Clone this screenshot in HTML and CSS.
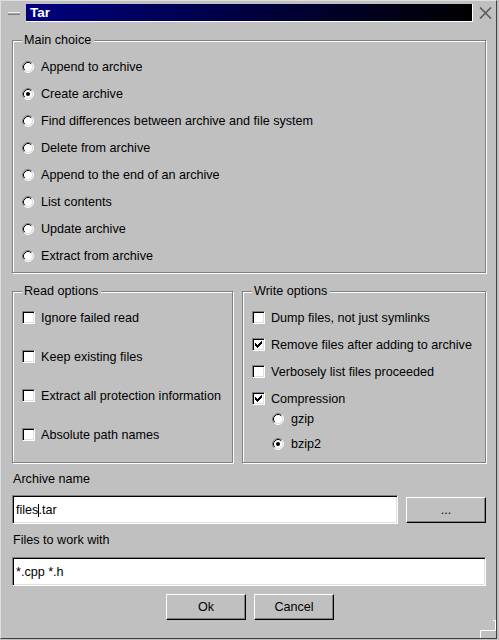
FILE: index.html
```html
<!DOCTYPE html>
<html>
<head>
<meta charset="utf-8">
<title>Tar</title>
<link rel="stylesheet" href="styles.css">
</head>
<body>
<svg class="defs" width="0" height="0">
  <symbol id="rb" viewBox="0 0 12 12">
    <circle cx="6" cy="6" r="5" fill="#fff"/>
    <path d="M2.11 9.89A5.5 5.5 0 0 1 9.89 2.11" fill="none" stroke="#808080"/>
    <path d="M9.89 2.11A5.5 5.5 0 0 1 2.11 9.89" fill="none" stroke="#fff"/>
    <path d="M2.82 9.18A4.5 4.5 0 0 1 9.18 2.82" fill="none" stroke="#000"/>
    <path d="M9.18 2.82A4.5 4.5 0 0 1 2.82 9.18" fill="none" stroke="#dfdfdf"/>
  </symbol>
  <symbol id="ck" viewBox="0 0 11 11">
    <path d="M2 4h1v3h-1z M3 5h1v3h-1z M4 6h1v3h-1z M5 5h1v3h-1z M6 4h1v3h-1z M7 3h1v3h-1z M8 2h1v3h-1z" fill="#000"/>
  </symbol>
</svg>
<div class="window">
  <div class="titlerow">
    <span class="sysmenu"></span>
    <div class="titlebar">Tar</div>
    <svg class="xbtn" width="13" height="12" viewBox="0 0 13 12">
      <path d="M1 0.5L12 11.5M12 0.5L1 11.5" stroke="#5e5e5e" stroke-width="1.7" fill="none"/>
    </svg>
  </div>
  <div class="content">
    <fieldset class="group main">
      <legend>Main choice</legend>
      <div class="row"><svg class="radio" width="12" height="12"><use href="#rb"/></svg><span>Append to archive</span></div>
      <div class="row"><svg class="radio" width="12" height="12"><use href="#rb"/><circle cx="6" cy="6" r="2" fill="#000"/></svg><span>Create archive</span></div>
      <div class="row"><svg class="radio" width="12" height="12"><use href="#rb"/></svg><span>Find differences between archive and file system</span></div>
      <div class="row"><svg class="radio" width="12" height="12"><use href="#rb"/></svg><span>Delete from archive</span></div>
      <div class="row"><svg class="radio" width="12" height="12"><use href="#rb"/></svg><span>Append to the end of an archive</span></div>
      <div class="row"><svg class="radio" width="12" height="12"><use href="#rb"/></svg><span>List contents</span></div>
      <div class="row"><svg class="radio" width="12" height="12"><use href="#rb"/></svg><span>Update archive</span></div>
      <div class="row"><svg class="radio" width="12" height="12"><use href="#rb"/></svg><span>Extract from archive</span></div>
    </fieldset>

    <div class="options">
      <fieldset class="group read">
        <legend>Read options</legend>
        <div class="row"><span class="check"></span><span>Ignore failed read</span></div>
        <div class="row"><span class="check"></span><span>Keep existing files</span></div>
        <div class="row"><span class="check"></span><span>Extract all protection information</span></div>
        <div class="row"><span class="check"></span><span>Absolute path names</span></div>
      </fieldset>
      <fieldset class="group write">
        <legend>Write options</legend>
        <div class="row"><span class="check"></span><span>Dump files, not just symlinks</span></div>
        <div class="row"><span class="check"><svg width="11" height="11"><use href="#ck"/></svg></span><span>Remove files after adding to archive</span></div>
        <div class="row"><span class="check"></span><span>Verbosely list files proceeded</span></div>
        <div class="row"><span class="check"><svg width="11" height="11"><use href="#ck"/></svg></span><span>Compression</span></div>
        <div class="row sub"><svg class="radio" width="12" height="12"><use href="#rb"/></svg><span>gzip</span></div>
        <div class="row sub second"><svg class="radio" width="12" height="12"><use href="#rb"/><circle cx="6" cy="6" r="2" fill="#000"/></svg><span>bzip2</span></div>
      </fieldset>
    </div>

    <div class="label">Archive name</div>
    <div class="name-row">
      <div class="input">files<span class="caret"></span>.tar</div>
      <button class="btn browse" type="button">...</button>
    </div>

    <div class="label">Files to work with</div>
    <div class="input files">*.cpp *.h</div>

    <div class="buttons">
      <button class="btn" type="button">Ok</button>
      <button class="btn" type="button">Cancel</button>
    </div>
  </div>
  <svg class="grip" width="20" height="20" viewBox="0 0 20 20">
    <path d="M16 1.5H18.5V11.5H3.5V19" fill="none" stroke="#fff"/>
  </svg>
</div>
</body>
</html>
```

FILE: styles.css
```css
* {
  box-sizing: border-box;
}

html,
body {
  margin: 0;
  padding: 0;
  background: #c0c0c0;
}

body {
  font-family: "Liberation Sans", Arial, Helvetica, sans-serif;
  font-size: 12.6px;
  color: #000;
}

.defs {
  position: absolute;
  width: 0;
  height: 0;
  overflow: hidden;
}

.window {
  position: relative;
  width: 497px;
  height: 639px;
  border: 1px solid;
  border-color: #dfdfdf #404040 #404040 #dfdfdf;
}

/* title bar */
.titlerow {
  display: grid;
  grid-template-columns: 12px 447px 13px;
  column-gap: 6px;
  align-items: center;
  height: 18px;
  margin-top: 3px;
  padding-left: 7px;
}

.sysmenu {
  display: block;
  width: 12px;
  height: 3px;
  border-top: 1px solid #f0f0f0;
  border-bottom: 1px solid #808080;
  background: #a8a8a8;
}

.titlebar {
  height: 18px;
  padding-left: 4px;
  background: linear-gradient(to right, #000080, #000000);
  border-right: 1px solid #fff;
  border-bottom: 1px solid #fff;
  color: #fff;
  font-weight: bold;
  font-size: 13.5px;
  line-height: 17px;
}

.xbtn {
  display: block;
  width: 13px;
  height: 12px;
}

/* content */
.content {
  padding: 12px 10px 0 11px;
}

.group {
  margin: 0;
  padding: 0 0 0 9px;
  min-width: 0;
  border: 1px solid #808080;
  box-shadow: 1px 1px 0 #fff, inset 1px 1px 0 #fff;
}

.group legend {
  padding: 0 3px 0 2px;
  line-height: 13px;
  background: #c0c0c0;
  white-space: nowrap;
}

.main {
  padding-top: 6px;
  padding-bottom: 3px;
}

.row {
  display: flex;
  align-items: center;
  height: 27px;
  line-height: 14px;
  white-space: nowrap;
}

.options {
  display: flex;
  gap: 9px;
  margin-top: 12px;
}

.read {
  flex: 0 0 221px;
  padding-bottom: 8px;
}

.read .row {
  height: 39px;
}

.write {
  flex: 1;
  padding-top: 6px;
  padding-bottom: 11px;
}

.write .sub {
  height: 14px;
  padding-left: 20px;
}

.write .sub.second {
  margin-top: 11px;
}

.radio {
  flex: none;
  display: block;
  width: 12px;
  height: 12px;
  margin-right: 7px;
}

.check {
  flex: none;
  display: block;
  width: 13px;
  height: 13px;
  margin-right: 6px;
  background: #fff;
  border: 1px solid;
  border-color: #808080 #fff #fff #808080;
  box-shadow: inset 1px 1px 0 #000, inset -1px -1px 0 #dfdfdf;
}

.check svg {
  display: block;
}

/* fields */
.label {
  margin-top: 9px;
  padding-left: 1px;
  line-height: 14px;
}

.name-row {
  display: flex;
  align-items: center;
  gap: 8px;
  margin-top: 9px;
}

.input {
  height: 29px;
  padding: 4px 0 0 3px;
  background: #fff;
  border: 1px solid;
  border-color: #808080 #fff #fff #808080;
  box-shadow: inset 1px 1px 0 #000, inset -1px -1px 0 #dfdfdf;
  line-height: 21px;
  white-space: nowrap;
}

.name-row .input {
  flex: 1;
}

.input.files {
  margin-top: 10px;
}

.caret {
  display: inline-block;
  width: 1px;
  height: 13px;
  margin-right: -1px;
  background: #000;
  vertical-align: -3px;
}

.btn {
  flex: none;
  width: 80px;
  height: 26px;
  padding: 0;
  margin: 0;
  font: inherit;
  color: #000;
  background: #c0c0c0;
  border: 1px solid;
  border-color: #fff #000 #000 #fff;
  box-shadow: inset -1px -1px 0 #808080;
  border-radius: 0;
  display: flex;
  align-items: center;
  justify-content: center;
}

.buttons {
  display: flex;
  justify-content: center;
  gap: 8px;
  margin-top: 8px;
  padding-left: 2px;
}

.grip {
  position: absolute;
  right: -1px;
  bottom: -1px;
}
```
